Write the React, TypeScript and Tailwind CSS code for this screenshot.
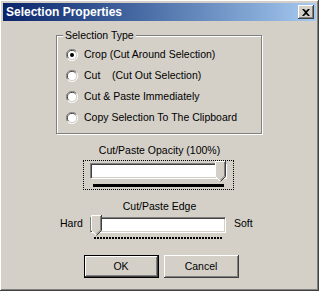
import React from 'react';

const raised =
  'shadow-[inset_-1px_-1px_0_#404040,inset_1px_1px_0_#fff,inset_-2px_-2px_0_#808080,inset_2px_2px_0_#d4d0c8]';

function Radio({ checked }: { checked?: boolean }) {
  return (
    <svg width="12" height="12" viewBox="0 0 12 12" className="shrink-0">
      <path d="M10.5 2.5 A5.5 5.5 0 0 0 1.5 9.5" fill="none" stroke="#808080" />
      <path d="M9.5 3 A4.5 4.5 0 0 0 2.5 9" fill="none" stroke="#404040" />
      <path d="M1.5 9.5 A5.5 5.5 0 0 0 10.5 2.5" fill="none" stroke="#fff" />
      <circle cx="6" cy="6" r="4" fill="#fff" />
      {checked && <circle cx="6" cy="6" r="2" fill="#000" />}
    </svg>
  );
}

function Thumb() {
  // pointing-down trackbar thumb
  return (
    <svg width="11" height="21" viewBox="0 0 11 21">
      <path d="M0.5 0.5 H10.5 V15.5 L5.5 20.5 L0.5 15.5 Z" fill="#d4d0c8" />
      <path d="M0.5 15.5 V0.5 H10" fill="none" stroke="#fff" />
      <path d="M10.5 0 V15.5 L5.5 20.5" fill="none" stroke="#404040" />
      <path d="M9.5 1 V15 L5.5 19" fill="none" stroke="#808080" />
      <path d="M0.5 15.5 L5 20" fill="none" stroke="#fff" />
    </svg>
  );
}

function Track({ thumbRight }: { thumbRight?: boolean }) {
  return (
    <div className="relative h-[16px] bg-white border-t border-l border-[#808080] shadow-[inset_1px_1px_0_#404040,inset_-1px_-1px_0_#d4d0c8] border-b border-r border-b-white border-r-white">
      <div className={`absolute -top-[3px] ${thumbRight ? 'right-0' : 'left-0'}`}>
        <Thumb />
      </div>
    </div>
  );
}

export default function App() {
  const options = [
    { label: 'Crop (Cut Around Selection)', checked: true },
    { label: 'Cut    (Cut Out Selection)' },
    { label: 'Cut & Paste Immediately' },
    { label: 'Copy Selection To The Clipboard' },
  ];

  return (
    <div
      className={`w-[319px] h-[291px] bg-[#d4d0c8] p-[3px] flex flex-col text-[10.5px] text-black ${raised}`}
      style={{ fontFamily: '"Liberation Sans", Arial, sans-serif' }}
    >
      {/* Title bar */}
      <div className="h-[18px] flex items-center justify-between pl-[3px] pr-[2px] bg-gradient-to-r from-[#0a246a] to-[#a6caf0]">
        <span className="text-white font-bold text-[12px] leading-none">Selection Properties</span>
        <div className={`w-[16px] h-[14px] bg-[#d4d0c8] flex items-center justify-center ${raised}`}>
          <svg width="8" height="7" viewBox="0 0 8 7">
            <path d="M0 0 L2 0 L4 2 L6 0 L8 0 L5 3.5 L8 7 L6 7 L4 5 L2 7 L0 7 L3 3.5 Z" fill="#000" />
          </svg>
        </div>
      </div>

      {/* Selection Type group */}
      <div className="relative ml-[53px] mt-[14px] w-[206px] h-[99px] border border-[#808080] shadow-[inset_1px_1px_0_#fff,1px_1px_0_#fff] pl-[9px] pt-[8px]">
        <span className="absolute -top-[8px] left-[6px] bg-[#d4d0c8] px-[2px] leading-[14px]">Selection Type</span>
        {options.map(o => (
          <div key={o.label} className="h-[21px] flex items-center gap-[6px]">
            <Radio checked={o.checked} />
            <span className="whitespace-pre">{o.label}</span>
          </div>
        ))}
      </div>

      {/* Opacity slider */}
      <div className="mt-[10px] text-center leading-[13px]">Cut/Paste Opacity (100%)</div>
      <div className="mt-[3px] ml-[80px] w-[151px] h-[30px] border border-dotted border-black px-[6px] pt-[2px]">
        <Track thumbRight />
        <div className="mt-[5px] mx-[3px] h-[3px] bg-black" />
      </div>

      {/* Edge slider */}
      <div className="mt-[10px] text-center leading-[13px]">Cut/Paste Edge</div>
      <div className="mt-[1px] flex items-start">
        <span className="ml-[57px] w-[30px] mt-[3px] leading-[13px]">Hard</span>
        <div className="w-[136px] pt-[3px]">
          <Track />
          <div className="mt-[4px] mx-[4px] h-[5px] flex flex-col">
            <div className="h-[2px] bg-[repeating-linear-gradient(90deg,#000_0_2px,transparent_2px_3px)]" />
          </div>
        </div>
        <span className="ml-[8px] mt-[3px] leading-[13px]">Soft</span>
      </div>

      {/* Buttons */}
      <div className="mt-[13px] flex justify-center gap-[5px] ml-[3px]">
        <button className="w-[75px] h-[23px] border border-black bg-[#d4d0c8] shadow-[inset_-1px_-1px_0_#404040,inset_1px_1px_0_#fff,inset_-2px_-2px_0_#808080]">
          OK
        </button>
        <button className={`w-[75px] h-[23px] bg-[#d4d0c8] ${raised}`}>Cancel</button>
      </div>
    </div>
  );
}
